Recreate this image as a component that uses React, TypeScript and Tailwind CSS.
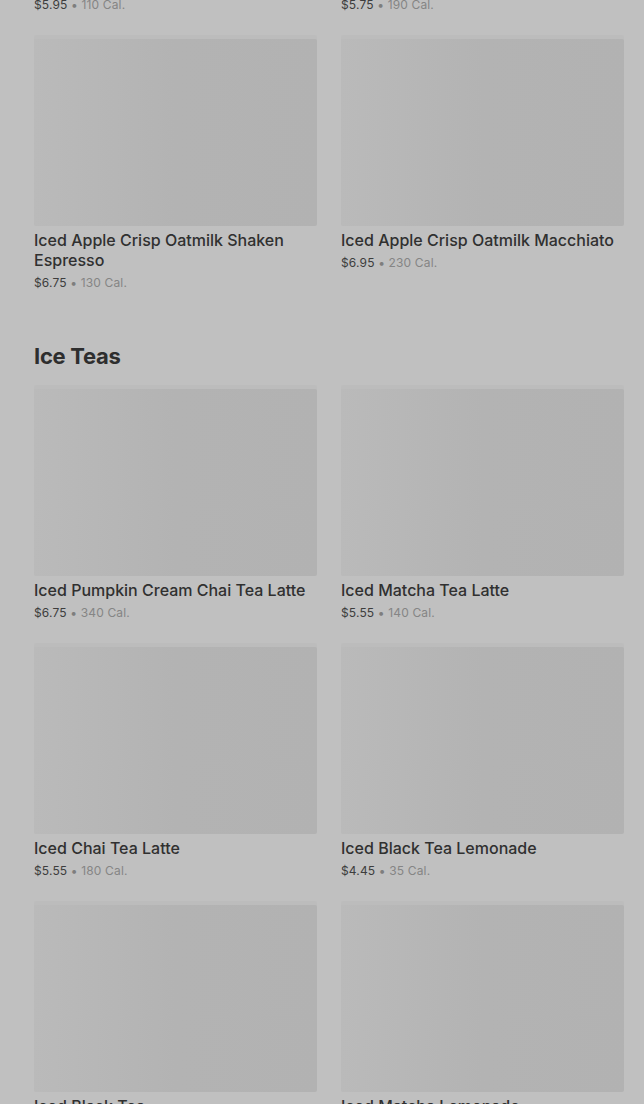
import React from "react";

type Item = { name: string; price: string; cal: string };

const font = { fontFamily: "Inter, 'Noto Sans', sans-serif" };

function Price({ price, cal }: { price: string; cal: string }) {
  return (
    <div className="text-[12px] leading-5 mt-[3px] tracking-[0.15px]">
      <span className="text-[#3d3d3d]">{price}</span>
      <span className="text-[#7e7e7e]"> • </span>
      <span className="text-[#858585]">{cal}</span>
    </div>
  );
}

function Card({ item }: { item: Item }) {
  return (
    <div className="flex flex-col">
      <div className="h-[187px] w-full rounded-[2px] bg-[#b3b3b3] bg-gradient-to-r from-[#bababa] via-[#b3b3b3] to-[#b2b2b2] shadow-[0_-4px_0_0_#bcbcbc]" />
      <div className="mt-1 text-[16px] leading-5 font-medium text-[#303030]">{item.name}</div>
      <Price price={item.price} cal={item.cal} />
    </div>
  );
}

const section1: Item[] = [
  { name: "Iced Apple Crisp Oatmilk Shaken Espresso", price: "$6.75", cal: "130 Cal." },
  { name: "Iced Apple Crisp Oatmilk Macchiato", price: "$6.95", cal: "230 Cal." },
];

const teas: Item[] = [
  { name: "Iced Pumpkin Cream Chai Tea Latte", price: "$6.75", cal: "340 Cal." },
  { name: "Iced Matcha Tea Latte", price: "$5.55", cal: "140 Cal." },
  { name: "Iced Chai Tea Latte", price: "$5.55", cal: "180 Cal." },
  { name: "Iced Black Tea Lemonade", price: "$4.45", cal: "35 Cal." },
  { name: "Iced Black Tea", price: "$3.95", cal: "0 Cal." },
  { name: "Iced Matcha Lemonade", price: "$5.25", cal: "110 Cal." },
];

export default function App() {
  return (
    <div className="w-[644px] h-[1104px] overflow-hidden bg-[#c0c0c0]" style={font}>
      <div className="pl-[34px] pr-[20px] -mt-[5px]">
        <div className="grid grid-cols-2 gap-x-6">
          <div className="-mt-[3px]"><Price price="$5.95" cal="110 Cal." /></div>
          <div className="-mt-[3px]"><Price price="$5.75" cal="190 Cal." /></div>
        </div>
        <div className="grid grid-cols-2 gap-x-6 gap-y-6 mt-6">
          {section1.map((it) => (
            <Card key={it.name} item={it} />
          ))}
        </div>
        <h2 className="mt-[49px] text-[22px] leading-7 font-bold text-[#2e2e2e] tracking-[-0.3px]">Ice Teas</h2>
        <div className="grid grid-cols-2 gap-x-6 gap-y-6 mt-[19px]">
          {teas.map((it) => (
            <Card key={it.name} item={it} />
          ))}
        </div>
      </div>
    </div>
  );
}
